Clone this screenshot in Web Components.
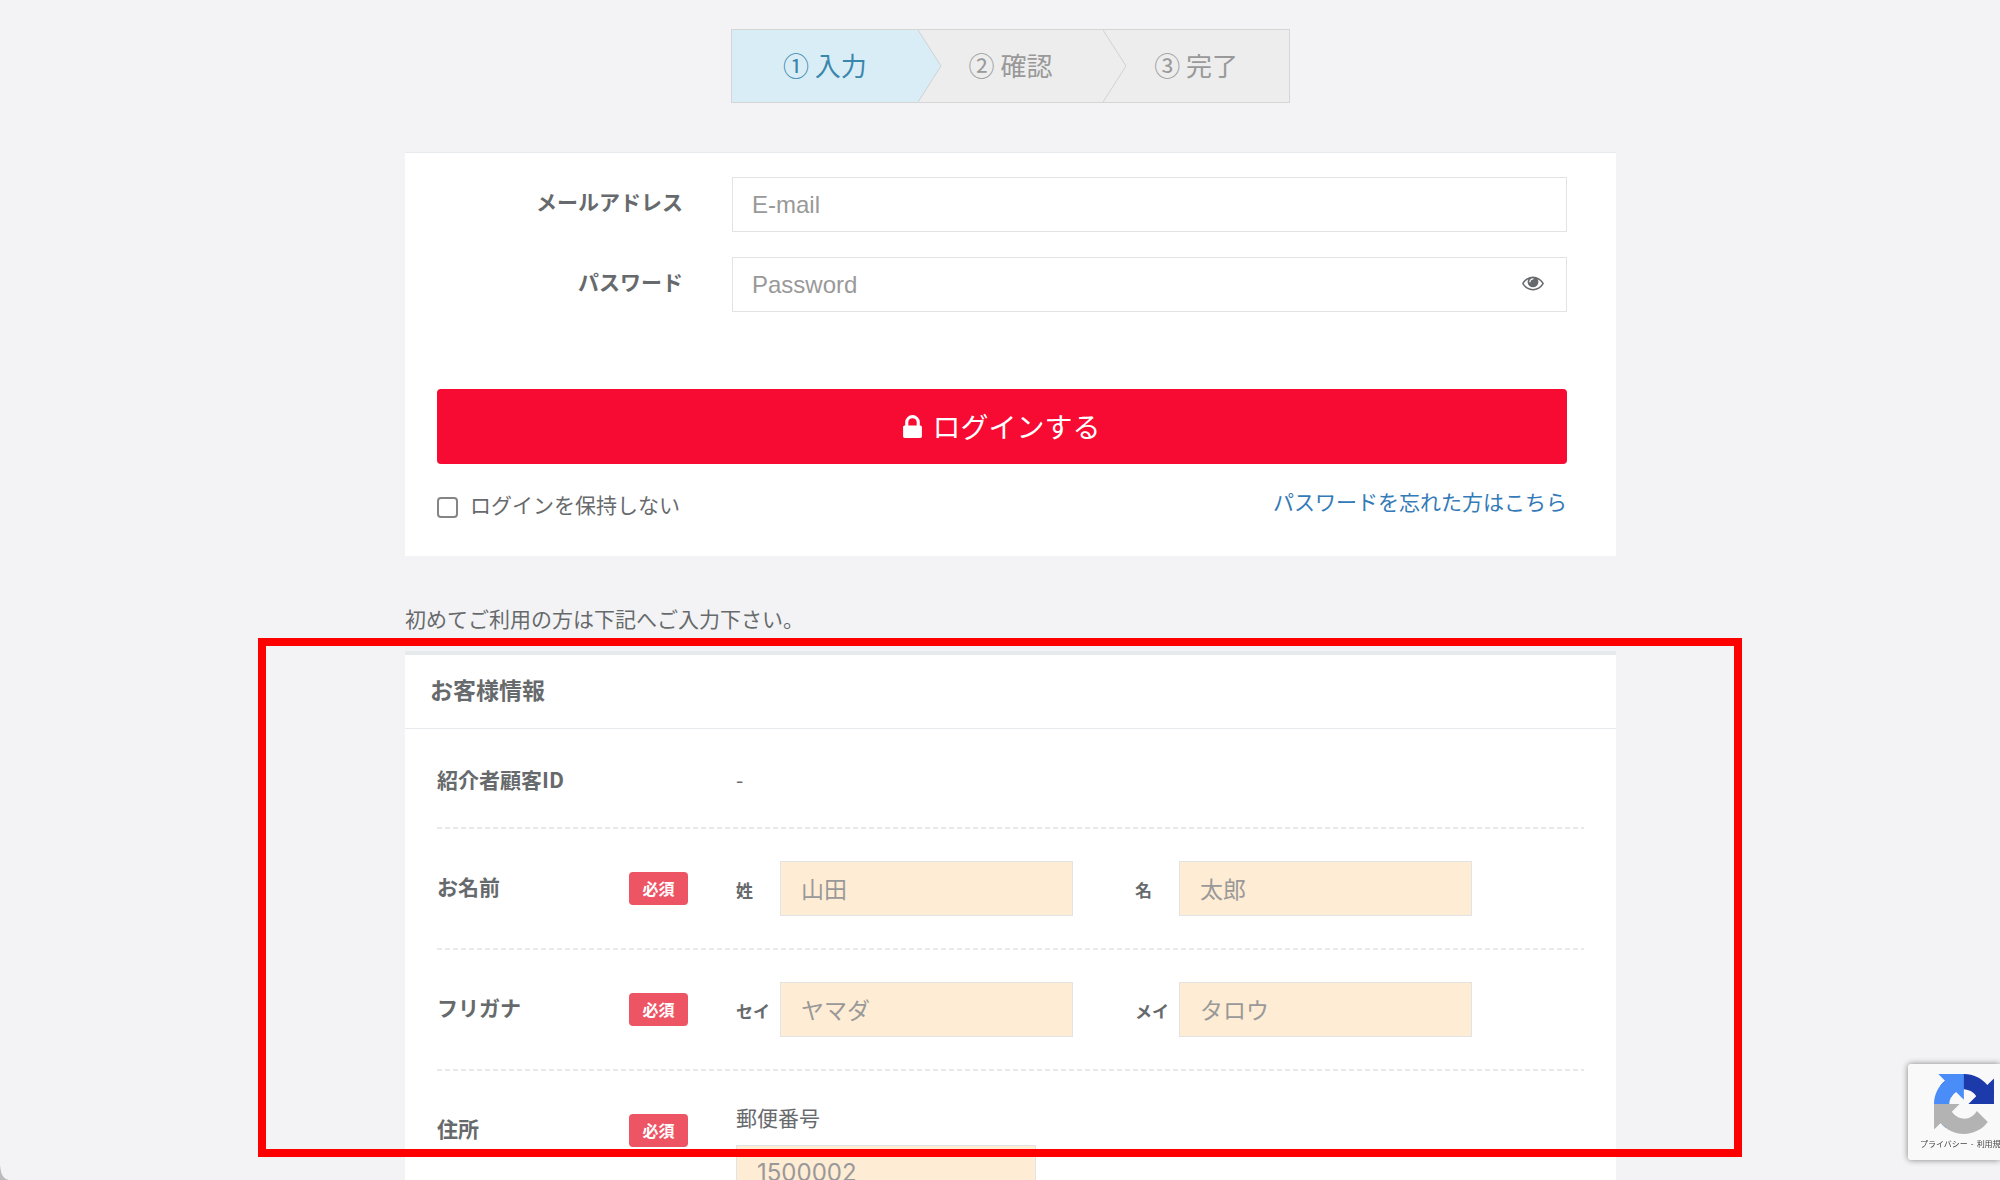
<!DOCTYPE html>
<html lang="ja">
<head>
<meta charset="utf-8">
<meta name="viewport" content="width=device-width, initial-scale=1">
<title>お客様情報入力</title>
<style>
  html {
    --text: #676a6c;
    --muted: #999;
    --line: #e7eaec;
    --field-line: #e2e3e5;
    --required-bg: #ffecd4;
    background: #f3f3f5;
  }
  body {
    margin: 0;
    height: 100vh;
    overflow: hidden;
    color: var(--text);
    font-family: "Noto Sans CJK JP", "Liberation Sans", sans-serif;
    font-size: 21px;
    line-height: 30px;
  }
</style>
</head>
<body>
<order-page></order-page>

<script>
const define = (name, html, setup) => {
  const template = document.createElement('template')
  template.innerHTML = html
  customElements.define(name, class extends HTMLElement {
    constructor() {
      super()
      this.attachShadow({ mode: 'open' }).appendChild(template.content.cloneNode(true))
    }
    connectedCallback() {
      if (setup) setup(this, this.shadowRoot)
    }
  })
}

define('step-list', `
  <nav aria-label="手順"><slot></slot></nav>
  <style>
    :host { display: block; width: 559px; max-width: 100%; margin: 0 auto; }
    nav { display: grid; grid-template-columns: repeat(3, 1fr); border: 1px solid #d4d5d5; }
  </style>
`)

define('step-item', `
  <span><slot></slot></span>
  <svg viewBox="0 0 24 72" preserveAspectRatio="none" aria-hidden="true">
    <path class="fill" d="M0 0L23 36L0 72z"/>
    <path class="edge" d="M0 0L23 36L0 72"/>
  </svg>
  <style>
    :host {
      --step-bg: #ededed;
      display: block;
      position: relative;
      padding: 17px 0 19px;
      background: var(--step-bg);
      color: var(--muted);
      font-size: 26px;
      line-height: 36px;
      text-align: center;
    }
    :host([active]) { --step-bg: #d9edf7; color: #3a87ad; }
    svg { position: absolute; z-index: 1; top: 0; left: 100%; width: 24px; height: 100%; }
    :host(:last-child) svg { display: none; }
    .fill { fill: var(--step-bg); }
    .edge { fill: none; stroke: #d0d1d1; stroke-width: 1; }
  </style>
`)

define('login-form', `
  <form>
    <div class="fields">
      <label for="email">メールアドレス</label>
      <input id="email" type="email" placeholder="E-mail">
      <label for="password">パスワード</label>
      <div class="password">
        <input id="password" type="password" placeholder="Password">
        <button type="button" class="eye" aria-label="パスワードを表示">
          <svg viewBox="0 256 1792 1408"><path d="M1664 960q-152-236-381-353 61 104 61 225 0 185-131.5 316.5t-316.5 131.5-316.5-131.5-131.5-316.5q0-121 61-225-229 117-381 353 133 205 333.5 326.5t434.5 121.5 434.5-121.5 333.5-326.5zm-720-384q0-20-14-34t-34-14q-125 0-214.5 89.5t-89.5 214.5q0 20 14 34t34 14 34-14 14-34q0-86 61-147t147-61q20 0 34-14t14-34zm848 384q0 34-20 69-140 230-376.5 368.5t-499.5 138.5-499.5-139-376.5-368q-20-35-20-69t20-69q140-229 376.5-368t499.5-139 499.5 139 376.5 368q20 35 20 69z"/></svg>
        </button>
      </div>
    </div>
    <button type="button" class="login">
      <svg viewBox="320 128 1152 1408" aria-hidden="true"><path d="M640 768h512v-192q0-106-75-181t-181-75-181 75-75 181v192zm832 96v576q0 40-28 68t-68 28h-960q-40 0-68-28t-28-68v-576q0-40 28-68t68-28h32v-192q0-184 132-316t316-132 316 132 132 316v192h32q40 0 68 28t28 68z"/></svg>
      <span>ログインする</span>
    </button>
    <div class="options">
      <label class="keep"><input type="checkbox">ログインを保持しない</label>
      <a href="#">パスワードを忘れた方はこちら</a>
    </div>
  </form>
  <style>
    :host { display: block; background: #fff; border-top: 1px solid var(--line); padding: 24px 49px 35px 32px; }
    .fields {
      display: grid;
      grid-template-columns: 246px 1fr;
      column-gap: 49px;
      row-gap: 25px;
    }
    .fields label { text-align: right; font-weight: bold; padding-top: 9px; }
    .fields input {
      box-sizing: border-box;
      width: 100%;
      height: 55px;
      padding: 0 19px;
      border: 1px solid var(--field-line);
      background: #fff;
      color: inherit;
      font: 24px "Liberation Sans", "Noto Sans CJK JP", sans-serif;
    }
    input::placeholder { color: var(--muted); opacity: 1; }
    .password { position: relative; }
    .eye {
      position: absolute;
      top: 0;
      right: 23px;
      height: 100%;
      padding: 0 0 2px;
      border: 0;
      background: none;
      color: inherit;
    }
    .eye svg { display: block; width: 22px; height: 17px; fill: currentColor; }
    .login {
      display: flex;
      align-items: center;
      justify-content: center;
      gap: 10px;
      width: 100%;
      height: 75px;
      margin-top: 77px;
      padding: 0;
      border: 0;
      border-radius: 4px;
      background: #f80b32;
      color: #fff;
      font: inherit;
      font-size: 28px;
    }
    .login svg { width: 19px; height: 23px; fill: currentColor; }
    .login span { padding-bottom: 2px; }
    .options { display: flex; justify-content: space-between; align-items: flex-start; margin-top: 22px; }
    .keep { display: flex; align-items: center; gap: 12px; margin-top: 3px; padding-bottom: 2px; }
    .keep input {
      appearance: none;
      box-sizing: border-box;
      width: 21px;
      height: 21px;
      margin: 7px 0 0;
      border: 2px solid #858585;
      border-radius: 4px;
      background: #fff;
    }
    a { color: #337ab7; text-decoration: none; }
  </style>
`)

define('info-panel', `
  <section>
    <h2><slot name="title"></slot></h2>
    <div><slot></slot></div>
  </section>
  <style>
    :host { display: block; }
    section { background: #fff; border-top: 4px solid var(--line); }
    h2 { margin: 0; padding: 19px 25px 24px; border-bottom: 1px solid var(--line); font-size: 23px; line-height: 30px; }
    div { padding: 4px 32px 32px; }
  </style>
`)

define('form-row', `
  <div class="title"><slot name="title"></slot></div>
  <div class="mark"><span>必須</span></div>
  <div><slot></slot></div>
  <style>
    :host {
      display: grid;
      grid-template-columns: 192px 107px 1fr;
      padding: 31px 0 35px;
      background: repeating-linear-gradient(90deg, #e9e9e9 0 5px, transparent 5px 8px) bottom / 100% 2px no-repeat;
    }
    :host([required]) { padding: 32px 0 34px; }
    .title { font-weight: bold; }
    :host([required]) .title { padding-top: 10px; }
    .mark { padding-top: 11px; }
    :host(:not([required])) .mark { visibility: hidden; height: 0; padding: 0; }
    :host(:not([required])) .mark span { display: none; }
    .mark span {
      display: block;
      width: 59px;
      border-radius: 4px;
      background: #ed5565;
      color: #fff;
      font-size: 16px;
      font-weight: bold;
      line-height: 33px;
      text-align: center;
    }
  </style>
`)

define('field-pair', `
  <slot></slot>
  <style>:host { display: flex; flex-wrap: wrap; gap: 62px; }</style>
`)

define('text-field', `
  <label for="field"></label>
  <input id="field" type="text">
  <style>
    :host { display: grid; grid-template-columns: 44px 293px; align-items: center; }
    label { font-size: 17px; font-weight: bold; padding-top: 3px; white-space: nowrap; }
    input {
      box-sizing: border-box;
      width: 100%;
      height: 55px;
      padding: 0 20px 2px;
      border: 1px solid var(--field-line);
      background: var(--required-bg);
      color: inherit;
      font: inherit;
      font-size: 23px;
    }
    input::placeholder { color: var(--muted); opacity: 1; }
    :host([stacked]) { grid-template-columns: 300px; row-gap: 14px; }
    :host([stacked]) label { font-size: 21px; font-weight: normal; line-height: 28px; padding-top: 0; }
    :host([stacked]) input { font: 24px Inter, "Noto Sans CJK JP", sans-serif; padding-bottom: 0; }
  </style>
`, (host, root) => {
  root.querySelector('label').textContent = host.getAttribute('label')
  root.querySelector('input').placeholder = host.getAttribute('placeholder')
})

define('captcha-badge', `
  <svg viewBox="0 0 64 64" aria-hidden="true">
    <path fill="#1c3aa9" d="M64 31.955l-.033-1.37V4.687l-7.16 7.16C50.948 4.674 42.033.093 32.05.093c-10.4 0-19.622 4.96-25.458 12.64l11.736 11.86a15.55 15.55 0 0 1 4.754-5.334c2.05-1.6 4.952-2.906 8.968-2.906.485 0 .86.057 1.135.163 4.976.393 9.288 3.14 11.828 7.124l-8.307 8.307L64 31.953"/>
    <path fill="#4b8df8" d="M31.862.094l-1.37.033H4.594l7.16 7.16C4.58 13.147 0 22.06 0 32.046c0 10.4 4.96 19.622 12.64 25.458L24.5 45.768a15.55 15.55 0 0 1-5.334-4.754c-1.6-2.05-2.906-4.952-2.906-8.968 0-.485.057-.86.163-1.135.393-4.976 3.14-9.288 7.124-11.828l8.307 8.307L31.86.095"/>
    <path fill="#b3b3b3" d="M.001 32.045l.033 1.37v25.898l7.16-7.16c5.86 7.173 14.774 11.754 24.76 11.754 10.4 0 19.622-4.96 25.458-12.64l-11.736-11.86a15.55 15.55 0 0 1-4.754 5.334c-2.05 1.6-4.952 2.906-8.968 2.906-.485 0-.86-.057-1.135-.163-4.976-.393-9.288-3.14-11.828-7.124l8.307-8.307c-10.522.04-22.4.066-27.295-.005"/>
  </svg>
  <p><a href="#">プライバシー</a><span>-</span><a href="#">利用規約</a></p>
  <style>
    :host {
      position: fixed;
      z-index: 3;
      right: 0;
      bottom: 20px;
      box-sizing: border-box;
      width: 92px;
      height: 96px;
      padding: 10px 0 0 12px;
      overflow: hidden;
      border-radius: 3px 0 0 3px;
      background: #f9f9f9;
      box-shadow: 0 0 6px #808080;
    }
    svg { display: block; width: 60px; height: 60px; margin-left: 14px; }
    p { margin: 4px 0 0; color: #444; font-size: 8px; line-height: 12px; white-space: nowrap; }
    span { margin: 0 3px; }
    a { color: inherit; text-decoration: none; }
  </style>
`)

define('order-page', `
  <main>
    <step-list>
      <step-item active>① 入力</step-item>
      <step-item>② 確認</step-item>
      <step-item>③ 完了</step-item>
    </step-list>
    <login-form></login-form>
    <p>初めてご利用の方は下記へご入力下さい。</p>
    <div class="customer">
      <info-panel>
        <span slot="title">お客様情報</span>
        <form-row><span slot="title">紹介者顧客ID</span>-</form-row>
        <form-row required>
          <span slot="title">お名前</span>
          <field-pair>
            <text-field label="姓" placeholder="山田"></text-field>
            <text-field label="名" placeholder="太郎"></text-field>
          </field-pair>
        </form-row>
        <form-row required>
          <span slot="title">フリガナ</span>
          <field-pair>
            <text-field label="セイ" placeholder="ヤマダ"></text-field>
            <text-field label="メイ" placeholder="タロウ"></text-field>
          </field-pair>
        </form-row>
        <form-row required>
          <span slot="title">住所</span>
          <text-field stacked label="郵便番号" placeholder="1500002"></text-field>
        </form-row>
      </info-panel>
      <div class="frame"></div>
    </div>
  </main>
  <captcha-badge></captcha-badge>
  <div class="corner"></div>
  <style>
    :host { display: block; padding: 29px 0 0 21px; }
    main { max-width: 1211px; margin: 0 auto; }
    login-form { margin-top: 49px; }
    p { margin: 47px 0 18px; }
    .customer { position: relative; }
    /* red outline laid over the customer section */
    .frame {
      position: absolute;
      z-index: 2;
      box-sizing: border-box;
      top: -13px;
      left: -147px;
      right: -126px;
      height: 519px;
      border: 8px solid #f00;
      pointer-events: none;
    }
    .corner {
      position: fixed;
      left: 0;
      bottom: 0;
      width: 8px;
      height: 14px;
      background: radial-gradient(ellipse 8px 14px at 100% 0, transparent 92%, #bbb 100%);
    }
  </style>
`)
</script>
</body>
</html>
